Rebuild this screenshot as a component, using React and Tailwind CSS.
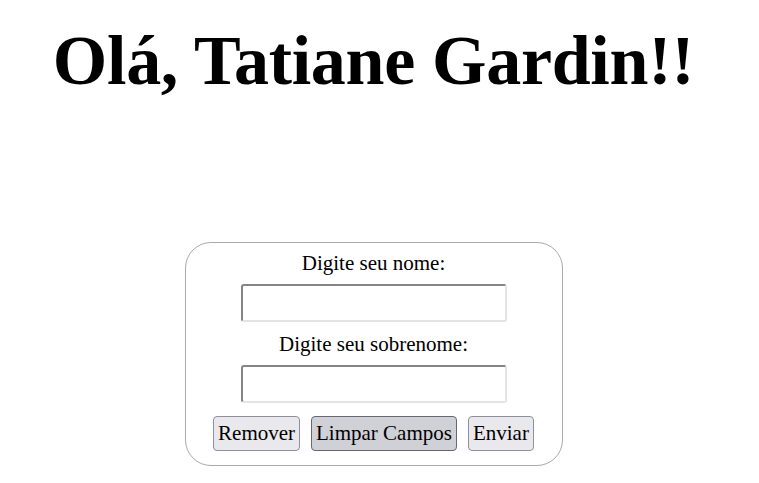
import React from 'react';

const serif = { fontFamily: '"Liberation Serif", "Times New Roman", serif' };

const Field = ({ label }) => (
  <>
    <label className="text-[21px] leading-[24px] text-black">{label}</label>
    <input
      type="text"
      className="mt-[9px] mb-[10px] h-[38px] w-[266px] rounded-[3px] border-2 border-t-[#858585] border-l-[#858585] border-b-[#e3e3e3] border-r-[#e3e3e3] bg-white px-1 outline-none"
    />
  </>
);

export default function App() {
  return (
    <div className="min-h-screen w-full bg-white" style={serif}>
      <div className="pr-[12px] flex flex-col items-center">
        <h1 className="mt-[16px] text-[70px] leading-[90px] font-bold tracking-[-0.3px] text-black whitespace-nowrap">
          Olá, Tatiane Gardin!!
        </h1>

        <div className="mt-[136px] w-[378px] h-[224px] rounded-[26px] border border-[#aaaaaa] flex flex-col items-center pt-[8px]">
          <Field label="Digite seu nome:" />
          <Field label="Digite seu sobrenome:" />
          <div className="flex gap-[11px] mt-[3px]">
            <button className="h-[35px] px-[4px] rounded-[4px] border border-[#8f8f9d] bg-[#e9e9ed] text-[21px] text-black">
              Remover
            </button>
            <button className="h-[35px] px-[4px] rounded-[4px] border border-[#676774] bg-[#d0d0d7] text-[21px] text-black">
              Limpar Campos
            </button>
            <button className="h-[35px] px-[4px] rounded-[4px] border border-[#8f8f9d] bg-[#e9e9ed] text-[21px] text-black">
              Enviar
            </button>
          </div>
        </div>
      </div>
    </div>
  );
}
